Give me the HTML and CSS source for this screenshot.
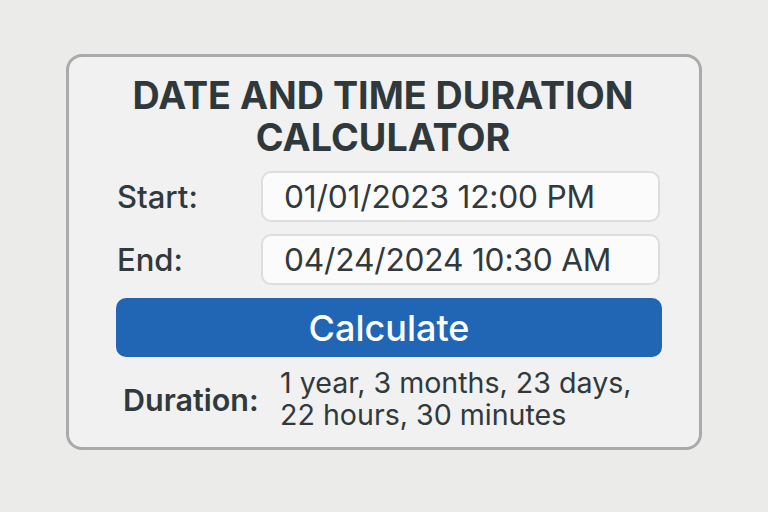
FILE: index.html
```html
<!DOCTYPE html>
<html lang="en">
<head>
    <meta charset="UTF-8">
    <meta name="viewport" content="width=device-width, initial-scale=1.0">
    <title>Date and Time Duration Calculator</title>
    <link rel="stylesheet" href="styles.css">
</head>
<body>
    <div class="calc-card">
        <h1>Date and Time Duration Calculator</h1>
        <form id="durationForm">
            <div class="field-row">
                <label for="start">Start:</label>
                <input type="text" id="start" value="01/01/2023 12:00 PM">
            </div>
            <div class="field-row">
                <label for="end">End:</label>
                <input type="text" id="end" value="04/24/2024 10:30 AM">
            </div>

            <button type="submit">Calculate</button>
        </form>

        <div class="result-row">
            <span class="result-label">Duration:</span>
            <span class="result-value" id="result">1 year, 3 months, 23 days,<br>22 hours, 30 minutes</span>
        </div>
    </div>
</body>
</html>
```

FILE: styles.css
```css
body {
    font-family: Inter, "Noto Sans", sans-serif;
    background-color: #ebebea;
    display: flex;
    justify-content: center;
    align-items: flex-start;
    height: 100vh;
    margin: 0;
    box-sizing: border-box;
    padding-top: 54px;
}

.calc-card {
    background-color: #f1f1f1;
    border: 3px solid #a9abab;
    border-radius: 16px;
    width: 636px;
    height: 396px;
    box-sizing: border-box;
    padding: 17px 37px 0 47px;
}

h1 {
    font-size: 37.7px;
    line-height: 42px;
    font-weight: 700;
    text-transform: uppercase;
    text-align: center;
    color: #2f383a;
    margin: 0 0 13px -12px;
}

.field-row {
    display: flex;
    align-items: center;
    margin-bottom: 12px;
}

label {
    width: 145px;
    font-size: 31px;
    font-weight: 500;
    color: #30393b;
    padding-left: 1px;
    box-sizing: border-box;
}

input[type="text"] {
    width: 399px;
    height: 51px;
    padding: 0 0 0 21px;
    border: 2px solid #dddddd;
    border-radius: 10px;
    background-color: #fbfbfb;
    box-sizing: border-box;
    font-family: inherit;
    font-size: 31.7px;
    letter-spacing: -0.2px;
    color: #30393b;
}

button {
    display: block;
    width: 546px;
    height: 59px;
    margin-top: 13px;
    background-color: #2166b5;
    color: #ffffff;
    border: none;
    border-radius: 10px;
    font-family: inherit;
    font-size: 36px;
    font-weight: 500;
    cursor: pointer;
}

button:hover {
    background-color: #1b5799;
}

.result-row {
    display: flex;
    align-items: center;
    margin-top: 10px;
    padding-left: 7px;
}

.result-label {
    width: 157px;
    font-size: 30.5px;
    font-weight: 600;
    color: #30393b;
}

.result-value {
    font-size: 28.6px;
    line-height: 32px;
    color: #30393b;
}
```
